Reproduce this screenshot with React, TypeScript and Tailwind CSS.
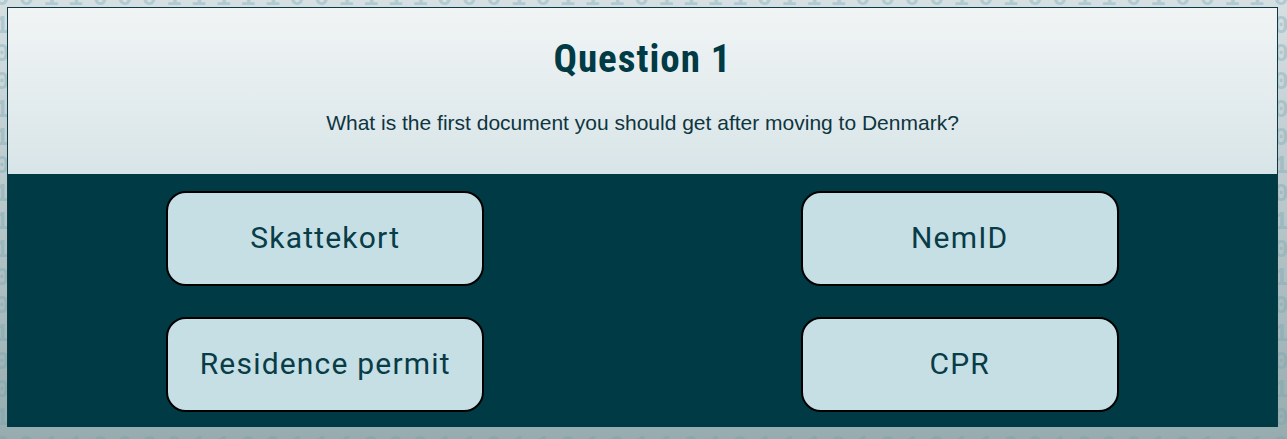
import React from "react";

function makeRows(): string[] {
  let seed = 7;
  const rows: string[] = [];
  for (let r = 0; r < 18; r++) {
    let s = "";
    for (let c = 0; c < 60; c++) {
      seed = (seed * 1103515245 + 12345) % 2147483648;
      s += (seed >> 16) % 2 === 0 ? "0" : "1";
    }
    rows.push(s);
  }
  return rows;
}

const rows = makeRows();

const answers = ["Skattekort", "NemID", "Residence permit", "CPR"];

export default function App() {
  return (
    <div className="relative w-[1287px] h-[439px] overflow-hidden bg-gradient-to-b from-[#d6e0e3] to-[#96acaf]">
      <div
        className="absolute inset-0 -top-[16px] -left-[6px] select-none text-[26px] leading-[28px] font-bold tracking-[9px] text-[#6fa3ad]/35 whitespace-pre"
        style={{ fontFamily: '"Liberation Mono", monospace' }}
        aria-hidden
      >
        {rows.map((r, i) => (
          <div key={i}>{r}</div>
        ))}
      </div>
      <div className="relative pt-[7px] pl-[7px]">
        <div className="w-[1271px] border border-[#0b3a44] border-b-0">
          <div className="h-[166px] bg-gradient-to-b from-[#f1f4f5] to-[#d8e5e8] flex flex-col items-center">
            <h1
              className="mt-[27px] text-[39px] leading-[48px] font-bold tracking-[1px] text-[#003a45]"
              style={{ fontFamily: '"Roboto Condensed", "Liberation Sans Narrow", Roboto, sans-serif' }}
            >
              Question 1
            </h1>
            <p
              className="mt-[28px] text-[21px] leading-[24px] text-[#0e3540]"
              style={{ fontFamily: '"Liberation Sans", Arial, sans-serif' }}
            >
              What is the first document you should get after moving to Denmark?
            </p>
          </div>
          <div className="h-[253px] bg-[#003a45] grid grid-cols-2 content-start gap-y-[31px] pt-[17px]">
            {answers.map((a) => (
              <div key={a} className="flex justify-center">
                <button
                  className="w-[318px] h-[95px] rounded-[20px] border-2 border-black bg-[#c5dfe5] pb-[3px] text-[30px] font-normal tracking-[1.2px] text-[#083c47]"
                  style={{ fontFamily: 'Roboto, sans-serif' }}
                >
                  {a}
                </button>
              </div>
            ))}
          </div>
        </div>
      </div>
    </div>
  );
}
